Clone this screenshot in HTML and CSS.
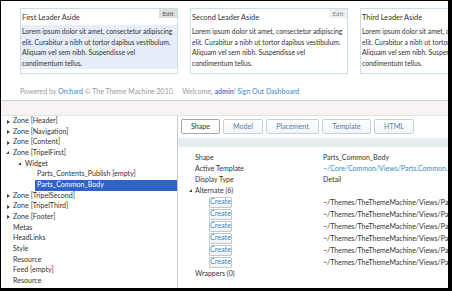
FILE: index.html
```html
<!DOCTYPE html>
<html lang="en">
<head>
    <meta charset="UTF-8">
    <title>Shape Tracing</title>
    <link rel="stylesheet" href="styles.css">
</head>
<body>
    <div class="frame">
        <div class="site">
            <div class="asides">
                <div class="aside active">
                    <span class="edit">Edit</span>
                    <h3>First Leader Aside</h3>
                    <p>Lorem ipsum dolor sit amet, consectetur adipiscing elit. Curabitur a nibh ut tortor dapibus vestibulum. Aliquam vel sem nibh. Suspendisse vel condimentum tellus.</p>
                </div>
                <div class="aside">
                    <span class="edit">Edit</span>
                    <h3>Second Leader Aside</h3>
                    <p>Lorem ipsum dolor sit amet, consectetur adipiscing elit. Curabitur a nibh ut tortor dapibus vestibulum. Aliquam vel sem nibh. Suspendisse vel condimentum tellus.</p>
                </div>
                <div class="aside">
                    <h3>Third Leader Aside</h3>
                    <p>Lorem ipsum dolor sit amet, consectetur adipiscing elit. Curabitur a nibh ut tortor dapibus vestibulum. Aliquam vel sem nibh. Suspendisse vel condimentum tellus.</p>
                </div>
            </div>
            <div class="site-footer">
                Powered by <a href="#">Orchard</a> &copy; The Theme Machine 2010.
                <span class="user">Welcome, <a href="#"><b>admin</b></a>! <a href="#">Sign Out</a> <a href="#">Dashboard</a></span>
            </div>
        </div>

        <div class="trace">
            <div class="trace-bar"></div>
            <div class="panels">
                <ul class="tree">
                    <li class="closed">Zone [Header]</li>
                    <li class="closed">Zone [Navigation]</li>
                    <li class="closed">Zone [Content]</li>
                    <li class="open">Zone [TripelFirst]</li>
                    <li class="open lvl1">Widget</li>
                    <li class="lvl2">Parts_Contents_Publish [empty]</li>
                    <li class="lvl2 selected">Parts_Common_Body</li>
                    <li class="closed">Zone [TripelSecond]</li>
                    <li class="closed">Zone [TripelThird]</li>
                    <li class="closed">Zone [Footer]</li>
                    <li>Metas</li>
                    <li>HeadLinks</li>
                    <li>Style</li>
                    <li>Resource</li>
                    <li>Feed [empty]</li>
                    <li>Resource</li>
                </ul>

                <div class="detail">
                    <div class="tabs">
                        <span class="tab current" style="width: 39px;">Shape</span>
                        <span class="tab" style="width: 40px;">Model</span>
                        <span class="tab" style="width: 53px;">Placement</span>
                        <span class="tab" style="width: 49px;">Template</span>
                        <span class="tab" style="width: 40px;">HTML</span>
                    </div>
                    <div class="detail-bar"></div>
                    <div class="props">
                        <div class="prop"><span class="key">Shape</span><span>Parts_Common_Body</span></div>
                        <div class="prop"><span class="key">Active Template</span><a href="#">~/Core/Common/Views/Parts.Common.Body.cshtml</a></div>
                        <div class="prop"><span class="key">Display Type</span><span>Detail</span></div>
                        <div class="prop alt"><span class="key">Alternate (6)</span></div>
                        <div class="create-row"><span class="create">Create</span><span>~/Themes/TheThemeMachine/Views/Parts.Common.Body-url-homepage.cshtml</span></div>
                        <div class="create-row"><span class="create">Create</span><span>~/Themes/TheThemeMachine/Views/Parts.Common.Body-Page.cshtml</span></div>
                        <div class="create-row"><span class="create">Create</span><span>~/Themes/TheThemeMachine/Views/Parts.Common.Body-Page-1.cshtml</span></div>
                        <div class="create-row"><span class="create">Create</span><span>~/Themes/TheThemeMachine/Views/Parts.Common.Body.Detail.cshtml</span></div>
                        <div class="create-row"><span class="create">Create</span><span>~/Themes/TheThemeMachine/Views/Parts.Common.Body.Detail-Page.cshtml</span></div>
                        <div class="create-row"><span class="create">Create</span><span>~/Themes/TheThemeMachine/Views/Parts.Common.Body.Detail-Page-1.cshtml</span></div>
                        <div class="prop"><span class="key">Wrappers (0)</span></div>
                    </div>
                </div>
            </div>
        </div>
    </div>
</body>
</html>
```

FILE: styles.css
```css
/* Global styles */
body {
    margin: 0;
    padding: 0;
    font-family: Lato, "Noto Sans", sans-serif;
    color: #333;
    background-color: #000;
}

a {
    color: #3a8ac4;
    text-decoration: none;
}

.frame {
    width: 452px;
    height: 291px;
    box-sizing: border-box;
    border-top: 1px solid #000;
    border-left: 1px solid #000;
    border-right: 4px solid #000;
    border-bottom: 3px solid #000;
    background-color: #fff;
    overflow: hidden;
    display: flex;
    flex-direction: column;
}

/* Site preview */
.site {
    height: 99px;
    flex: none;
    overflow: hidden;
}

.asides {
    display: flex;
    gap: 12px;
    margin: 7px 0 0 19px;
    white-space: nowrap;
}

.aside {
    flex: none;
    width: 158px;
    height: 66px;
    box-sizing: border-box;
    border: 1px solid #cddde6;
    position: relative;
    white-space: normal;
}

.aside h3 {
    margin: 0;
    height: 16px;
    padding: 3px 0 0 1px;
    box-sizing: border-box;
    font-size: 7.4px;
    line-height: 11px;
    font-weight: normal;
    color: #333;
}

.aside p {
    margin: 0;
    padding: 1px 0 1px 1px;
    font-size: 6.8px;
    line-height: 10.5px;
    color: #333;
}

.aside.active p {
    background-color: #e8eef9;
}

.edit {
    position: absolute;
    top: 0;
    right: 0;
    width: 18px;
    height: 9px;
    background-color: #ddd;
    font-size: 6.4px;
    line-height: 9px;
    text-align: center;
    color: #555;
}

.aside:not(.active) .edit {
    background-color: #eee;
    color: #888;
}

.site-footer {
    margin: 12px 0 0 19px;
    font-size: 7px;
    line-height: 11px;
    color: #999;
    white-space: nowrap;
}

.site-footer .user {
    margin-left: 6px;
}

/* Shape tracing panel */
.trace {
    flex: 1;
    display: flex;
    flex-direction: column;
    border-top: 1px solid #cfcfcf;
    min-height: 0;
}

.trace-bar {
    height: 14px;
    flex: none;
    background-color: #f8f3f3;
    border-bottom: 1px solid #e4e4e4;
}

.panels {
    flex: 1;
    display: flex;
    min-height: 0;
}

.tree {
    list-style: none;
    margin: 0;
    padding: 0;
    width: 176px;
    flex: none;
    border-right: 1px solid #c8c8c8;
    font-size: 7.1px;
    white-space: nowrap;
}

.tree li {
    height: 10.67px;
    line-height: 10.67px;
    padding-left: 12px;
    position: relative;
}

.tree li.lvl1 {
    padding-left: 24px;
}

.tree li.lvl2 {
    padding-left: 36px;
}

.tree li.closed::before,
.tree li.open::before {
    content: "";
    position: absolute;
    width: 0;
    height: 0;
}

.tree li.closed::before {
    left: 6px;
    top: 3.5px;
    border-left: 3px solid #444;
    border-top: 2px solid transparent;
    border-bottom: 2px solid transparent;
}

.tree li.open::before {
    left: 5px;
    top: 3.5px;
    border-right: 3.5px solid #444;
    border-top: 3.5px solid transparent;
}

.tree li.lvl1.open::before {
    left: 17px;
}

.tree li.selected {
    margin-left: 34px;
    padding-left: 2px;
    background-color: #2f63c9;
    color: #fff;
}

.detail {
    flex: 1;
    min-width: 0;
    overflow: hidden;
    white-space: nowrap;
}

.tabs {
    display: flex;
    gap: 3px;
    padding: 3px 0 0 3px;
}

.tab {
    height: 15px;
    box-sizing: border-box;
    border: 1px solid #c4d0da;
    border-radius: 2px;
    background: linear-gradient(#fff, #f2f5f8);
    font-size: 7.1px;
    line-height: 13px;
    text-align: center;
    color: #5580a8;
}

.tab.current {
    border-color: #a6a6a6;
    background: #fff;
    color: #333;
}

.detail-bar {
    height: 9px;
    margin-top: 4px;
    background-color: #e7ecef;
}

.props {
    padding: 5px 0 0 17px;
    font-size: 7px;
}

.prop {
    display: flex;
    height: 11px;
    line-height: 11px;
}

.prop .key {
    width: 128px;
    flex: none;
}

.prop.alt {
    position: relative;
}

.prop.alt::before {
    content: "";
    position: absolute;
    left: -6px;
    top: 4px;
    border-right: 3.5px solid #444;
    border-top: 3.5px solid transparent;
}

.create-row {
    display: flex;
    align-items: center;
    height: 12px;
}

.create {
    width: 23px;
    height: 11px;
    box-sizing: border-box;
    margin: 0 91px 0 14px;
    flex: none;
    border: 1px solid #c2c9ce;
    border-radius: 1px;
    background: linear-gradient(#fff, #f1f3f5);
    color: #3a8ac4;
    font-size: 7.2px;
    line-height: 8.5px;
    text-align: center;
}
```
